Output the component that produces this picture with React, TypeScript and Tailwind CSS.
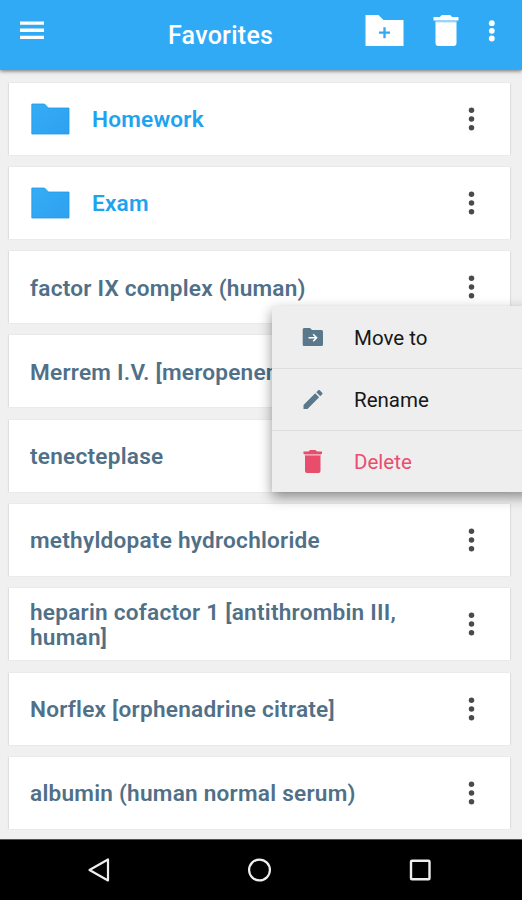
type Item = { label: string; folder?: boolean };

const items: Item[] = [
  { label: 'Homework', folder: true },
  { label: 'Exam', folder: true },
  { label: 'factor IX complex (human)' },
  { label: 'Merrem I.V. [meropenem]' },
  { label: 'tenecteplase' },
  { label: 'methyldopate hydrochloride' },
  { label: 'heparin cofactor 1 [antithrombin III, human]' },
  { label: 'Norflex [orphenadrine citrate]' },
  { label: 'albumin (human normal serum)' },
];

function Dots() {
  return (
    <svg className="h-6 w-2 shrink-0 fill-[#4a4a4c]" viewBox="0 0 8 24">
      <circle cx="4.500" cy="3.300" r="2.750" />
      <circle cx="4.500" cy="12" r="2.750" />
      <circle cx="4.500" cy="20.700" r="2.750" />
    </svg>
  );
}

function Folder() {
  return (
    <svg className="mr-[22px] ml-px h-[32px] w-[39px] shrink-0" viewBox="0 0 39 32">
      <defs>
        <linearGradient id="folder" x1="0" y1="0" x2="1" y2="1">
          <stop offset="0" stopColor="#35adf5" />
          <stop offset="1" stopColor="#2ea0f0" />
        </linearGradient>
      </defs>
      <path d="M.8 1H13.500l4 4H38V31H.8Z" fill="url(#folder)" stroke="#1c9ce8" strokeWidth=".8" />
    </svg>
  );
}

function Header() {
  return (
    <header className="relative flex h-[70px] shrink-0 bg-[#31aaf5] text-white shadow-[0_1px_4px_rgba(0,0,0,0.55)]">
      <svg className="mt-5 ml-5 h-5 w-6 fill-white" viewBox="0 0 24 20">
        <path d="M0 1.500h24v3.300H0zM0 8.600h24v3.300H0zM0 15.700h24v3.300H0z" />
      </svg>
      <h1 className="mt-[21px] ml-[124px] w-[197px] text-[25px] leading-[30px] font-medium tracking-[0.260px]">
        Favorites
      </h1>
      <svg className="mt-[15px] h-[31px] w-[39px]" viewBox="0 0 39 31">
        <path d="M.5 0H13.500l5 5H38.500V31H.5Z" fill="white" />
        <path d="M19.500 12.200v11M14 17.700h11" stroke="#31aaf5" strokeWidth="2.300" />
      </svg>
      <svg className="mt-[14px] ml-[29px] h-8 w-[26px]" viewBox="0 0 26 32">
        <path d="M.5 3h6.500q1-2 2.500-2h7q1.500 0 2.500 2h6.500v3.500H.5Z" fill="white" />
        <path d="M2.300 6.300h21.400v2.200H2.300Z" fill="#9bd4fa" />
        <path d="M2.500 8.300h21V29q0 3-3 3H5.500q-3 0-3-3Z" fill="white" />
      </svg>
      <svg className="mt-5 ml-[29px] h-[22px] w-2 fill-white" viewBox="0 0 8 22">
        <circle cx="3.800" cy="3.200" r="2.900" />
        <circle cx="3.800" cy="10.800" r="2.900" />
        <circle cx="3.800" cy="18.500" r="2.900" />
      </svg>
    </header>
  );
}

function Card({ item }: { item: Item }) {
  return (
    <li className="flex h-[72px] shrink-0 items-center bg-white pr-[35px] pl-[21px] shadow-[1px_0_1px_rgba(0,0,0,0.07),-1px_0_1px_rgba(0,0,0,0.07)]">
      {item.folder && <Folder />}
      <span
        className={
          item.folder
            ? 'grow pt-0.5 text-[22.600px] leading-[25px] font-semibold tracking-[0.220px] text-[#1ea3f1]'
            : 'grow pt-0.5 pr-8 text-[22.600px] leading-[25px] font-semibold tracking-[0.240px] text-[#507088]'
        }
      >
        {item.label}
      </span>
      <Dots />
    </li>
  );
}

function ContextMenu() {
  const row = 'flex h-[62px] items-center pl-[30px] text-[20.500px] text-[#171717]';
  return (
    <div className="absolute top-[306px] left-[272px] w-[260px] bg-[#eeeeee] shadow-[0_5px_12px_rgba(0,0,0,0.42)]">
      <div className={row}>
        <svg className="mr-[31px] h-[18px] w-[21px] fill-[#5a788b]" viewBox="0 0 21 18">
          <path d="M2 0H8l2 2H19.500q1.500 0 1.500 1.500v13q0 1.500-1.500 1.500H2Q.7 18 .7 16.500v-15Q.7 0 2 0Z" />
          <path d="M6.500 9.800h8M11.200 6.300l3.400 3.500-3.400 3.500" fill="none" stroke="white" strokeWidth="1.500" />
        </svg>
        <span className="pt-0.5">Move to</span>
      </div>
      <div className={`${row} border-t border-[#dcdfe1]`}>
        <svg className="mr-[31px] ml-px h-[19px] w-[20px] fill-[#5a788b]" viewBox="3 3 18 18">
          <path d="M3 17.250V21h3.750L17.810 9.940l-3.750-3.750L3 17.250zM20.710 7.040a1 1 0 0 0 0-1.410l-2.340-2.340a1 1 0 0 0-1.410 0l-1.830 1.830 3.750 3.750 1.830-1.830z" />
        </svg>
        <span className="pt-px">Rename</span>
      </div>
      <div className={`${row} h-[61px] border-t border-[#dcdfe1] text-[#eb4c70]`}>
        <svg className="mr-[32px] ml-px h-[23px] w-[19px]" viewBox="0 0 19 23">
          <path d="M.5 1.500h5l1.500-1.500h5.500L14 1.500h5V4H.5Z" fill="#e94d6c" />
          <path d="M1.500 4h16.500v1.500H1.500Z" fill="#efa5b4" />
          <path d="M2 5.500h15.500V21q0 2-2 2H4q-2 0-2-2Z" fill="#e94d6c" />
        </svg>
        <span className="pt-px">Delete</span>
      </div>
    </div>
  );
}

function NavBar() {
  return (
    <nav className="flex h-[61px] shrink-0 items-center border-t border-[#555] bg-black">
      <svg className="ml-[87px] h-6 w-6" viewBox="0 0 24 24" fill="none" stroke="#eee" strokeWidth="2.200">
        <path d="M21 1.500v21L2.500 12Z" strokeLinejoin="round" />
      </svg>
      <svg className="ml-[136px] h-6 w-6" viewBox="0 0 24 24" fill="none" stroke="#eee" strokeWidth="2.200">
        <circle cx="12.500" cy="12" r="10.400" />
      </svg>
      <svg className="ml-[137px] h-6 w-6" viewBox="0 0 24 24" fill="none" stroke="#eee" strokeWidth="2.400">
        <rect x="3" y="2.700" width="18.500" height="18.500" rx="1" />
      </svg>
    </nav>
  );
}

export default function App() {
  return (
    <div className="relative flex h-[900px] w-[522px] flex-col overflow-hidden bg-[#f0f0f0] font-['Roboto',sans-serif]">
      <Header />
      <ul className="flex grow flex-col gap-[12.300px] pr-3 pl-[9px] pt-[12.500px]">
        {items.map((item) => (
          <Card key={item.label} item={item} />
        ))}
      </ul>
      <NavBar />
      <ContextMenu />
    </div>
  );
}
